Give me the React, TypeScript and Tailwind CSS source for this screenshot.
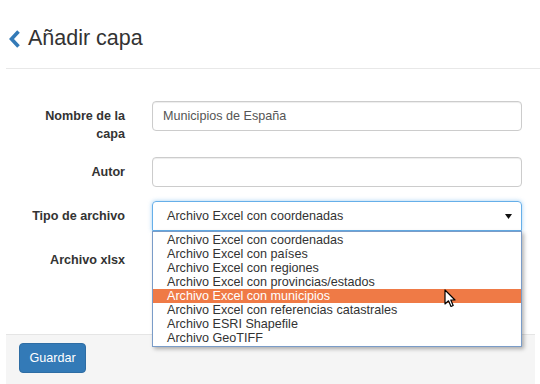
import React from "react";

const options = [
  "Archivo Excel con coordenadas",
  "Archivo Excel con países",
  "Archivo Excel con regiones",
  "Archivo Excel con provincias/estados",
  "Archivo Excel con municipios",
  "Archivo Excel con referencias catastrales",
  "Archivo ESRI Shapefile",
  "Archivo GeoTIFF",
];

export default function App() {
  return (
    <div
      className="w-[540px] h-[384px] bg-white relative overflow-hidden flex flex-col text-[#333]"
      style={{ fontFamily: '"Liberation Sans", Arial, sans-serif' }}
    >
      {/* Header */}
      <div className="px-[6px] shrink-0">
        <div className="h-[69px] flex items-center pt-[10px] pl-[2px] border-b border-[#e8e8e8] mr-[-6px]">
          <svg width="13" height="18" viewBox="0 0 13 18" className="shrink-0">
            <polyline
              points="10.5,1.5 3.5,9 10.5,16.5"
              fill="none"
              stroke="#337ab7"
              strokeWidth="3.6"
              strokeLinejoin="miter"
            />
          </svg>
          <span className="ml-[7px] text-[21.5px] leading-none">Añadir capa</span>
        </div>
      </div>

      {/* Body */}
      <div className="flex-1 pt-[32px] px-[6px]">
        {/* Row 1 */}
        <div className="flex mb-[14px]">
          <div className="w-[119px] text-right font-bold text-[12.6px] leading-[18px] pt-[6px]">
            Nombre de la
            <br />
            capa
          </div>
          <div className="ml-[27px] w-[370px] h-[30px] border border-[#ccc] rounded-[4px] pl-[10px] flex items-center text-[12.6px] text-[#555] shadow-[inset_0_1px_1px_rgba(0,0,0,0.075)]">
            Municipios de España
          </div>
        </div>
        {/* Row 2 */}
        <div className="flex mb-[14px]">
          <div className="w-[119px] text-right font-bold text-[12.6px] leading-[18px] pt-[6px]">
            Autor
          </div>
          <div className="ml-[27px] w-[370px] h-[30px] border border-[#ccc] rounded-[4px] shadow-[inset_0_1px_1px_rgba(0,0,0,0.075)]" />
        </div>
        {/* Row 3 */}
        <div className="flex mb-[14px]">
          <div className="w-[119px] text-right font-bold text-[12.6px] leading-[18px] pt-[6px]">
            Tipo de archivo
          </div>
          <div className="ml-[27px] w-[370px] h-[30px] relative">
            <div className="h-[30px] border border-[#66afe9] rounded-t-[4px] pl-[14px] pr-[9px] flex items-center justify-between text-[12.6px] text-[#333] shadow-[0_0_4px_rgba(102,175,233,0.6)]">
              <span>Archivo Excel con coordenadas</span>
              <svg width="7" height="5" viewBox="0 0 7 5">
                <polygon points="0,0 7,0 3.5,5" fill="#111" />
              </svg>
            </div>
            {/* Dropdown list */}
            <div className="absolute left-0 top-[30px] w-[370px] bg-white border border-[#7a9cc8] shadow-[2px_2px_4px_rgba(0,0,0,0.3)] z-10 py-[1px]">
              {options.map((o, i) => (
                <div
                  key={o}
                  className={
                    i === 4
                      ? "h-[14px] leading-[14px] text-[12.6px] pl-[14px] bg-[#ef7a46] text-white"
                      : "h-[14px] leading-[14px] text-[12.6px] pl-[14px] text-[#333]"
                  }
                >
                  {o}
                </div>
              ))}
            </div>
          </div>
        </div>
        {/* Row 4 */}
        <div className="flex">
          <div className="w-[119px] text-right font-bold text-[12.6px] leading-[18px] pt-[6px]">
            Archivo xlsx
          </div>
        </div>
      </div>

      {/* Footer */}
      <div className="px-[6px] pr-[5px] shrink-0">
        <div className="h-[50px] bg-[#f5f5f5] border-t border-[#e5e5e5] pt-[8px] pl-[13px]">
          <button className="w-[67px] h-[30px] bg-[#337ab7] border border-[#2e6da4] rounded-[4px] text-white text-[12.6px] flex items-center justify-center">
            Guardar
          </button>
        </div>
      </div>

      {/* Mouse cursor */}
      <svg
        width="13"
        height="20"
        viewBox="0 0 13 20"
        className="absolute left-[444px] top-[289px] z-20"
      >
        <path
          d="M1,1 L1,15 L4.5,11.8 L7,17.5 L9.2,16.5 L6.8,11 L11,11 Z"
          fill="white"
          stroke="black"
          strokeWidth="1.2"
          strokeLinejoin="round"
        />
      </svg>
    </div>
  );
}
